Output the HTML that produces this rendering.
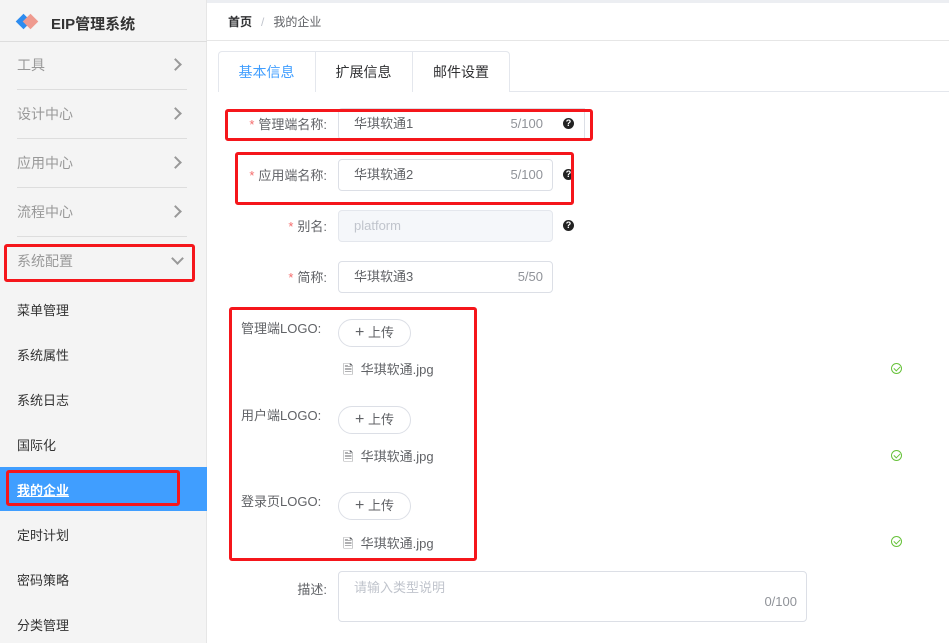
<!DOCTYPE html>
<html><head><meta charset="utf-8"><style>
*{margin:0;padding:0;box-sizing:border-box}
body{width:949px;height:643px;overflow:hidden;position:relative;background:#fff;font-family:"Liberation Sans","Noto Sans CJK SC",sans-serif;font-size:13px;color:#606266}
.a{position:absolute}
.side{left:0;top:0;width:207px;height:643px;background:#f4f4f4;border-right:1px solid #e6e6e6}
.mi{left:17px;color:#999;font-size:14px}
.sep{left:17px;width:170px;height:1px;background:#ddd}
.chev{left:171px;width:9px;height:9px;border-right:2px solid #999;border-top:2px solid #999;transform:rotate(45deg)}
.sub{left:17px;color:#333;font-size:13px}
.red{border:3px solid #f5161b;border-radius:3px}
.lbl{width:120px;text-align:right;left:207px;color:#606266}
.star{color:#f56c6c;margin-right:4px}
.inp{left:338px;width:215px;height:32px;border:1px solid #dcdfe6;border-radius:4px;padding-left:15px;line-height:30px;color:#606266}
.cnt{position:absolute;right:9px;top:0;color:#909399;font-size:13px}
.q{width:11px;height:11px;border-radius:50%;background:#222;color:#fff;font-size:9px;font-weight:bold;text-align:center;line-height:11px}
.up{left:338px;width:73px;height:28px;border:1px solid #dcdfe6;border-radius:15px;text-align:center;line-height:26px;color:#606266}
.file{left:343px;color:#606266}
.ok{left:891px;width:11px;height:11px;border:1px solid #67c23a;border-radius:50%}
.ok:after{content:"";position:absolute;left:3px;top:1px;width:3px;height:5px;border-right:1px solid #67c23a;border-bottom:1px solid #67c23a;transform:rotate(45deg)}
</style></head><body>
<div class="a" style="left:0;top:0;width:949px;height:3px;background:#eceef2"></div>
<div class="a side"></div>
<div class="a" style="left:0;top:41px;width:207px;height:1px;background:#ddd"></div>
<svg class="a" style="left:14px;top:12px" width="26" height="20"><rect x="4" y="4" width="11" height="11" transform="rotate(45 9.5 9.5)" fill="#2d8cf0"/><rect x="11" y="4" width="11" height="11" transform="rotate(45 16.5 9.5)" fill="#ef9a8f"/></svg>
<div class="a" style="left:51px;top:13px;font-size:15px;font-weight:bold;color:#333">EIP管理系统</div>
<div class="a mi" style="top:55px">工具</div><div class="a chev" style="top:60px"></div><div class="a sep" style="top:89px"></div>
<div class="a mi" style="top:104px">设计中心</div><div class="a chev" style="top:109px"></div><div class="a sep" style="top:138px"></div>
<div class="a mi" style="top:153px">应用中心</div><div class="a chev" style="top:158px"></div><div class="a sep" style="top:187px"></div>
<div class="a mi" style="top:202px">流程中心</div><div class="a chev" style="top:207px"></div><div class="a sep" style="top:236px"></div>
<div class="a mi" style="top:251px">系统配置</div><div class="a chev" style="top:254px;left:173px;transform:rotate(135deg)"></div>
<div class="a sub" style="top:300px">菜单管理</div>
<div class="a sub" style="top:345px">系统属性</div>
<div class="a sub" style="top:390px">系统日志</div>
<div class="a sub" style="top:435px">国际化</div>
<div class="a" style="left:0;top:467px;width:207px;height:44px;background:#409eff"></div>
<div class="a sub" style="top:480px;color:#fff;font-weight:bold;text-decoration:underline">我的企业</div>
<div class="a sub" style="top:525px">定时计划</div>
<div class="a sub" style="top:570px">密码策略</div>
<div class="a sub" style="top:615px">分类管理</div>
<div class="a red" style="left:4px;top:244px;width:191px;height:38px"></div>
<div class="a red" style="left:6px;top:470px;width:174px;height:36px"></div>

<div class="a" style="left:228px;top:13px;font-size:12px;color:#303133"><b>首页</b><span style="color:#c0c4cc;margin:0 9px">/</span><span style="color:#606266">我的企业</span></div>
<div class="a" style="left:207px;top:40px;width:742px;height:1px;background:#e6e6e6"></div>
<div class="a" style="left:510px;top:91px;width:439px;height:1px;background:#e4e7ed"></div>
<div class="a" style="left:218px;top:51px;width:292px;height:41px;border:1px solid #e4e7ed;border-bottom:none;border-radius:4px 4px 0 0"></div>
<div class="a" style="left:315px;top:51px;width:1px;height:41px;background:#e4e7ed"></div>
<div class="a" style="left:412px;top:51px;width:1px;height:41px;background:#e4e7ed"></div>
<div class="a" style="left:218px;top:62px;width:97px;text-align:center;color:#409eff;font-size:14px">基本信息</div>
<div class="a" style="left:315px;top:62px;width:97px;text-align:center;color:#303133;font-size:14px">扩展信息</div>
<div class="a" style="left:412px;top:62px;width:98px;text-align:center;color:#303133;font-size:14px">邮件设置</div>

<div class="a lbl" style="top:114px"><span class="star">*</span>管理端名称:</div>
<div class="a inp" style="top:108px;border-radius:4px 0 0 4px">华琪软通1<span class="cnt">5/100</span></div>
<div class="a" style="left:552px;top:108px;width:33px;height:32px;border:1px solid #dcdfe6;border-left:none;background:#fff"></div>
<div class="a q" style="left:563px;top:118px">?</div>
<div class="a lbl" style="top:165px"><span class="star">*</span>应用端名称:</div>
<div class="a inp" style="top:159px">华琪软通2<span class="cnt">5/100</span></div>
<div class="a q" style="left:563px;top:169px">?</div>
<div class="a lbl" style="top:216px"><span class="star">*</span>别名:</div>
<div class="a inp" style="top:210px;background:#f5f7fa;border-color:#e4e7ed;color:#c0c4cc">platform</div>
<div class="a q" style="left:563px;top:220px">?</div>
<div class="a lbl" style="top:267px"><span class="star">*</span>简称:</div>
<div class="a inp" style="top:261px">华琪软通3<span class="cnt">5/50</span></div>

<div class="a" style="left:241px;top:318px">管理端LOGO:</div>
<div class="a up" style="top:319px"><span style="font-size:16px">+</span> 上传</div>
<div class="a file" style="top:359px">🗎&nbsp; 华琪软通.jpg</div><div class="a ok" style="top:363px"></div>
<div class="a" style="left:241px;top:405px">用户端LOGO:</div>
<div class="a up" style="top:406px"><span style="font-size:16px">+</span> 上传</div>
<div class="a file" style="top:446px">🗎&nbsp; 华琪软通.jpg</div><div class="a ok" style="top:450px"></div>
<div class="a" style="left:241px;top:491px">登录页LOGO:</div>
<div class="a up" style="top:492px"><span style="font-size:16px">+</span> 上传</div>
<div class="a file" style="top:533px">🗎&nbsp; 华琪软通.jpg</div><div class="a ok" style="top:536px"></div>

<div class="a lbl" style="top:579px">描述:</div>
<div class="a" style="left:338px;top:571px;width:469px;height:51px;border:1px solid #dcdfe6;border-radius:4px;padding:5px 15px;color:#c0c4cc">请输入类型说明<span style="position:absolute;right:9px;bottom:12px;color:#909399">0/100</span></div>

<div class="a red" style="left:225px;top:109px;width:368px;height:32px"></div>
<div class="a red" style="left:235px;top:152px;width:339px;height:53px"></div>
<div class="a red" style="left:229px;top:307px;width:248px;height:254px"></div>
</body></html>
